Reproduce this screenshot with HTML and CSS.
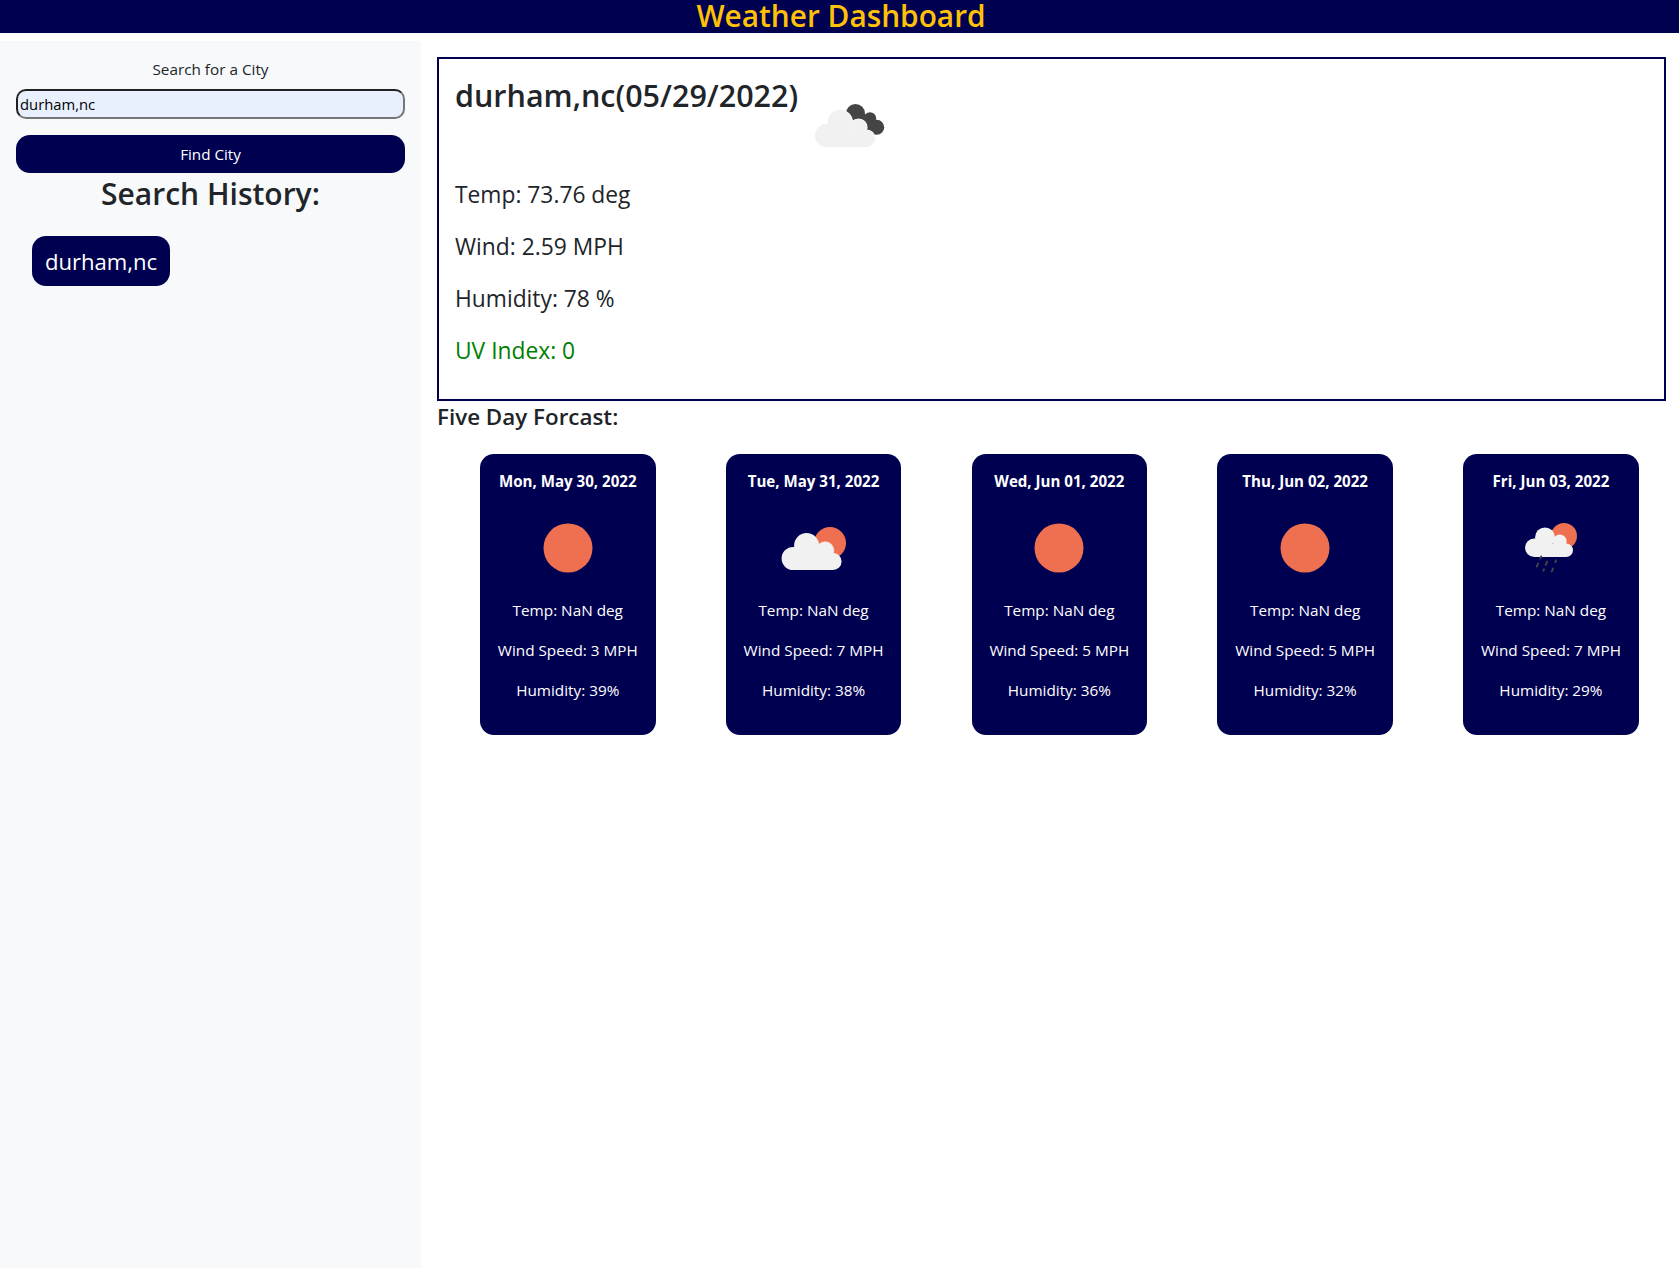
FILE: index.html
```html
<!DOCTYPE html>
<html>
  <head>
    <title>Weather Dashboard</title>
    <link rel="stylesheet" href="styles.css">
  </head>
  <body>
    <header class="top-bar">
      <h1>Weather Dashboard</h1>
    </header>

    <div class="page">
      <aside class="sidebar">
        <label class="search-label" for="city">Search for a City</label>
        <input class="search-input" type="text" id="city" value="durham,nc">
        <button class="find-btn">Find City</button>
        <h2 class="history-title">Search History:</h2>
        <button class="history-btn">durham,nc</button>
      </aside>

      <main class="content">
        <section class="today">
          <div class="today-head">
            <h2>durham,nc(05/29/2022)</h2>
            <svg class="icon" viewBox="0 0 100 100">
              <defs>
                <g id="cloud">
                  <path d="M28.5 72 A11.5 11.5 0 0 1 28.5 49 H45 V55 H68.5 A8.5 8.5 0 0 1 68.5 72 Z"/>
                  <circle cx="42" cy="47.5" r="12.5"/>
                  <circle cx="60.5" cy="52.5" r="8.5"/>
                </g>
              </defs>
              <g fill="#444">
                <circle cx="57.5" cy="38.5" r="9.5"/>
                <circle cx="72" cy="43.5" r="6.2"/>
                <circle cx="78.7" cy="52.3" r="7.5"/>
                <path d="M48 38 L57 38 L72 40 L79 52 L77 60 L60 60 Z"/>
              </g>
              <use href="#cloud" fill="#fff" stroke="#fff" stroke-width="1.2"/>
              <use href="#cloud" fill="#f1f1f1"/>
            </svg>
          </div>
          <p>Temp: 73.76 deg</p>
          <p>Wind: 2.59 MPH</p>
          <p>Humidity: 78 %</p>
          <p class="uv-low">UV Index: 0</p>
        </section>

        <h4 class="forecast-title">Five Day Forcast:</h4>

        <div class="cards">
          <div class="card">
            <p class="card-date">Mon, May 30, 2022</p>
            <svg class="icon" viewBox="0 0 100 100">
              <circle cx="50" cy="50" r="24.5" fill="#ee7050"/>
            </svg>
            <p>Temp: NaN deg</p>
            <p>Wind Speed: 3 MPH</p>
            <p>Humidity: 39%</p>
          </div>
          <div class="card">
            <p class="card-date">Tue, May 31, 2022</p>
            <svg class="icon" viewBox="0 0 100 100">
              <circle cx="66" cy="45" r="16" fill="#ee7050"/>
              <g transform="translate(0.6 0)">
                <circle cx="60.5" cy="52.5" r="9.3" fill="#f6c4b4"/>
                <use href="#cloud" fill="#f1f1f1"/>
              </g>
            </svg>
            <p>Temp: NaN deg</p>
            <p>Wind Speed: 7 MPH</p>
            <p>Humidity: 38%</p>
          </div>
          <div class="card">
            <p class="card-date">Wed, Jun 01, 2022</p>
            <svg class="icon" viewBox="0 0 100 100">
              <circle cx="50" cy="50" r="24.5" fill="#ee7050"/>
            </svg>
            <p>Temp: NaN deg</p>
            <p>Wind Speed: 5 MPH</p>
            <p>Humidity: 36%</p>
          </div>
          <div class="card">
            <p class="card-date">Thu, Jun 02, 2022</p>
            <svg class="icon" viewBox="0 0 100 100">
              <circle cx="50" cy="50" r="24.5" fill="#ee7050"/>
            </svg>
            <p>Temp: NaN deg</p>
            <p>Wind Speed: 5 MPH</p>
            <p>Humidity: 32%</p>
          </div>
          <div class="card">
            <p class="card-date">Fri, Jun 03, 2022</p>
            <svg class="icon" viewBox="0 0 100 100">
              <circle cx="63" cy="38" r="13" fill="#ee7050"/>
              <use href="#cloud" fill="#f1f1f1" transform="translate(10.4 1.4) scale(0.8)"/>
              <g stroke="#444" stroke-width="2" stroke-linecap="round">
                <path d="M40.2 58.5 L39.4 60.5"/>
                <path d="M37 65.5 L35.8 68.5"/>
                <path d="M46 63.8 L44.8 66.8"/>
                <path d="M55 62.3 L54.3 64"/>
                <path d="M43 71.3 L42.4 72.7"/>
                <path d="M52 70.5 L50.8 73.5"/>
              </g>
            </svg>
            <p>Temp: NaN deg</p>
            <p>Wind Speed: 7 MPH</p>
            <p>Humidity: 29%</p>
          </div>
        </div>
      </main>
    </div>
  </body>
</html>
```

FILE: styles.css
```css
* {
  box-sizing: border-box;
}

body {
  margin: 0;
  font-family: "Open Sans", "Noto Sans", sans-serif;
  font-size: 15.3px;
  line-height: 24px;
  color: #212529;
  background-color: #fff;
}

/* top bar */
.top-bar {
  height: 33px;
  padding-left: 3px;
  background-color: #000050;
  text-align: center;
}

.top-bar h1 {
  margin: 0;
  font-size: 29.8px;
  font-weight: 600;
  line-height: 31px;
  color: #ffc107;
}

.page {
  display: flex;
  margin-top: 8px;
}

/* left column */
.sidebar {
  display: flex;
  flex-direction: column;
  width: 421px;
  height: 1227px;
  padding: 16px 16px 0;
  background-color: #f8f9fa;
  flex-shrink: 0;
}

.search-label {
  text-align: center;
  height: 24px;
}

.search-input {
  width: 389px;
  height: 30px;
  margin-top: 8px;
  padding: 1px 2px;
  border: 2px solid;
  border-color: #212121 #767676 #767676 #212121;
  border-radius: 10px;
  background-color: #e8f0fe;
  font-family: inherit;
  font-size: 14.8px;
  color: #000;
}

.find-btn {
  width: 389px;
  height: 38px;
  margin-top: 16px;
  border: none;
  border-radius: 14px;
  background-color: #000050;
  color: #fff;
  font-family: inherit;
  font-size: 15.2px;
}

.history-title {
  margin: 0;
  font-size: 30px;
  font-weight: 600;
  line-height: 41px;
  text-align: center;
}

.history-btn {
  align-self: flex-start;
  width: 138px;
  height: 50px;
  margin: 22px 0 0 16px;
  border: none;
  border-radius: 14px;
  background-color: #000050;
  color: #fff;
  font-family: inherit;
  font-size: 22.1px;
}

/* main column */
.content {
  flex: 1;
  padding: 16px 13px 0 16px;
}

.today {
  height: 344px;
  padding: 16px;
  border: 2px solid #000050;
}

.today-head {
  display: flex;
  height: 102px;
}

.today-head h2 {
  width: 343px;
  margin: 0;
  font-size: 30.5px;
  font-weight: 600;
  line-height: 40px;
  white-space: nowrap;
}

.today p {
  margin: 0 0 16px;
  font-size: 22.8px;
  line-height: 36px;
}

.today .uv-low {
  color: green;
}

.icon {
  display: block;
  width: 100px;
  height: 100px;
  flex-shrink: 0;
}

.forecast-title {
  margin: 0;
  padding-top: 1px;
  font-size: 22.4px;
  font-weight: 600;
  line-height: 29px;
}

/* forecast cards */
.cards {
  display: flex;
  gap: 70.3px;
  margin-top: 23px;
  padding-left: 43px;
}

.card {
  width: 175.5px;
  height: 281px;
  padding-top: 15px;
  border-radius: 14px;
  background-color: #000050;
  color: #fff;
  text-align: center;
}

.card p {
  margin: 0 0 16px;
}

.card .card-date {
  margin-bottom: 5px;
  font-size: 15.1px;
  font-weight: 700;
}

.card .icon {
  margin: 0 auto;
}
```
